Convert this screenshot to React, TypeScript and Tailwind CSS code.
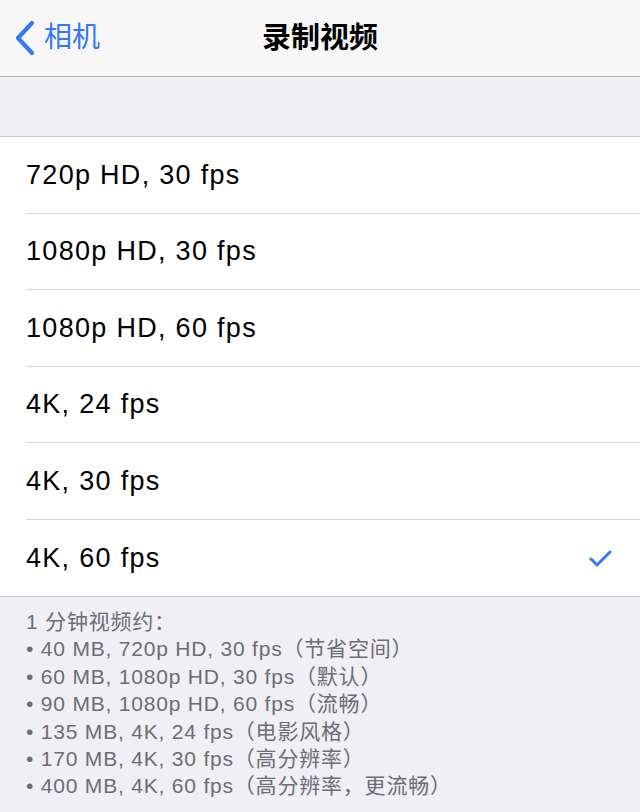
import React from "react";

const rows = [
  "720p HD, 30 fps",
  "1080p HD, 30 fps",
  "1080p HD, 60 fps",
  "4K, 24 fps",
  "4K, 30 fps",
  "4K, 60 fps",
];

const notes = [
  "• 40 MB, 720p HD, 30 fps（节省空间）",
  "• 60 MB, 1080p HD, 30 fps（默认）",
  "• 90 MB, 1080p HD, 60 fps（流畅）",
  "• 135 MB, 4K, 24 fps（电影风格）",
  "• 170 MB, 4K, 30 fps（高分辨率）",
  "• 400 MB, 4K, 60 fps（高分辨率，更流畅）",
];

export default function App() {
  return (
    <div
      className="w-[640px] h-[812px] overflow-hidden bg-[#efeff4]"
      style={{ fontFamily: '"Liberation Sans", "Noto Sans CJK SC", sans-serif' }}
    >
      <div className="relative h-[77px] bg-[#f7f7f7] border-b border-[#b9b9bb] flex items-center justify-center">
        <div className="absolute left-[14px] top-0 h-full flex items-center gap-[8px] text-[#3478f6]">
          <svg width="22" height="36" viewBox="0 0 22 36">
            <path d="M18 3 L4 18 L18 33" fill="none" stroke="#3478f6" strokeWidth="4.2" strokeLinecap="round" strokeLinejoin="round" />
          </svg>
          <span className="text-[28px] leading-none">相机</span>
        </div>
        <span className="text-[29px] font-bold text-black leading-none">录制视频</span>
      </div>
      <div className="h-[60px] border-b border-[#c8c7cc]" />
      <div className="bg-white border-b border-[#c8c7cc]">
        {rows.map((r, i) => (
          <div key={r} className="pl-[26px]">
            <div
              className={`h-[76.5px] flex items-center justify-between pr-[27px] text-[27px] tracking-[1.3px] text-black ${
                i < rows.length - 1 ? "border-b border-[#d1d1d6]" : ""
              }`}
            >
              <span>{r}</span>
              {i === rows.length - 1 && (
                <svg width="24" height="20" viewBox="0 0 24 20">
                  <path d="M2 11 L8 17 L21 4" fill="none" stroke="#3478f6" strokeWidth="3" strokeLinecap="round" strokeLinejoin="round" />
                </svg>
              )}
            </div>
          </div>
        ))}
      </div>
      <div className="pl-[26px] pt-[11px] text-[21px] tracking-[0.8px] leading-[27.4px] text-[#6d6d72]">
        <div>1 分钟视频约：</div>
        {notes.map((n) => (
          <div key={n}>{n}</div>
        ))}
      </div>
    </div>
  );
}
